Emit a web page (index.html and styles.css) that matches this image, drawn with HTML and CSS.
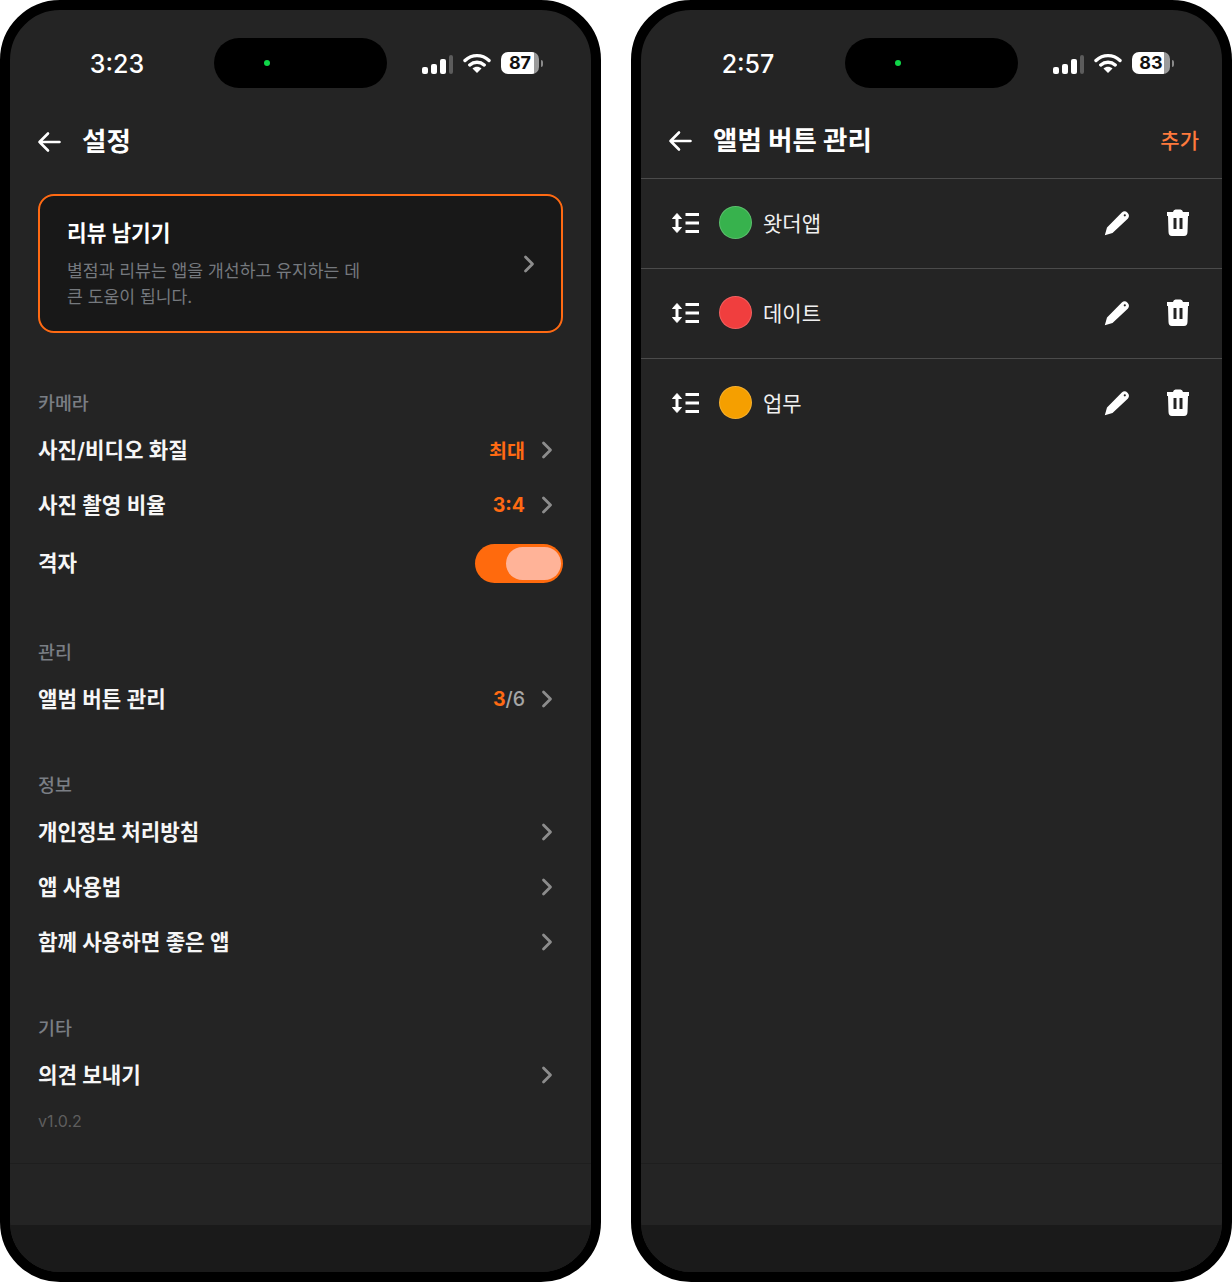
FILE: index.html
```html
<!DOCTYPE html>
<html lang="ko">
<head>
	<meta charset="UTF-8">
	<title>설정</title>
	<link rel="stylesheet" href="styles.css">
</head>
<body>
	<svg class="defs">
		<symbol id="i-back" viewBox="0 0 24 22">
			<path d="M22.5 11H2.5M11 2.5L2.5 11L11 19.5" fill="none" stroke="#fff" stroke-width="2.6" stroke-linecap="round" stroke-linejoin="round"/>
		</symbol>
		<symbol id="i-chevron" viewBox="0 0 12 18">
			<path d="M2.5 2L9.5 9L2.5 16" fill="none" stroke="#8c8c8c" stroke-width="2.8" stroke-linecap="round" stroke-linejoin="round"/>
		</symbol>
		<symbol id="i-wifi" viewBox="0 0 28 22">
			<path d="M2 8.5C9 2 19 2 26 8.5M6.8 13C11 9.3 17 9.3 21.2 13" fill="none" stroke="#fff" stroke-width="3.4" stroke-linecap="round"/>
			<path d="M9.5 16.5C12 14.3 16 14.3 18.5 16.5L14 21Z" fill="#fff"/>
		</symbol>
		<symbol id="i-handle" viewBox="0 0 28 22">
			<path d="M6 4V18" stroke="#fff" stroke-width="3"/>
			<path d="M1.5 6.5L6 1.5L10.5 6.5ZM1.5 15.5L6 20.5L10.5 15.5Z" fill="#fff" stroke="#fff" stroke-linejoin="round"/>
			<path d="M14.5 2.500H28M14.5 11H28M14.5 19.500H28" stroke="#fff" stroke-width="2.8"/>
		</symbol>
		<symbol id="i-pencil" viewBox="0 0 26 26">
			<path d="M0.8 25.2L3 17.5L17.8 2.4A4.4 4.4 0 0 1 24 8.5L8.500 23Z" fill="#fff"/>
			<circle cx="20.8" cy="5.3" r="1.1" fill="#242424"/>
		</symbol>
		<symbol id="i-trash" viewBox="0 0 22 27">
			<path fill-rule="evenodd" d="M0 3H6Q6.5 0.5 8.5 0.5H13.5Q15.5 0.5 16 3H22V7H21L20.5 23Q20.4 27 17 27H5Q1.6 27 1.5 23L1 7H0ZM6.5 9V20H9.5V9ZM12.5 9V20H15.5V9Z" fill="#fff"/>
		</symbol>
	</svg>

	<div class="phone">
		<div class="status">
			<div class="time">3:23</div>
			<div class="island"><span class="cam"></span></div>
			<div class="status-icons">
				<div class="signal"><i class="b1"></i><i class="b2"></i><i class="b3"></i><i class="b4"></i></div>
				<svg class="wifi"><use href="#i-wifi"/></svg>
				<div class="battery"><div class="batt-body batt-87">87</div><span class="batt-nub"></span></div>
			</div>
		</div>

		<div class="header">
			<svg class="back"><use href="#i-back"/></svg>
			<h1 class="title">설정</h1>
		</div>

		<div class="settings">
			<div class="review">
				<div class="review-text">
					<div class="review-title">리뷰 남기기</div>
					<p class="review-desc">별점과 리뷰는 앱을 개선하고 유지하는 데<br>큰 도움이 됩니다.</p>
				</div>
				<svg class="chevron"><use href="#i-chevron"/></svg>
			</div>

			<div class="label label-first">카메라</div>
			<div class="row"><span>사진/비디오 화질</span><span class="val">최대</span><svg class="chevron"><use href="#i-chevron"/></svg></div>
			<div class="row"><span>사진 촬영 비율</span><span class="val">3:4</span><svg class="chevron"><use href="#i-chevron"/></svg></div>
			<div class="row row-toggle"><span>격자</span><div class="toggle"><span class="knob"></span></div></div>

			<div class="label">관리</div>
			<div class="row"><span>앨범 버튼 관리</span><span class="val">3<em>/6</em></span><svg class="chevron"><use href="#i-chevron"/></svg></div>

			<div class="label">정보</div>
			<div class="row"><span>개인정보 처리방침</span><svg class="chevron"><use href="#i-chevron"/></svg></div>
			<div class="row"><span>앱 사용법</span><svg class="chevron"><use href="#i-chevron"/></svg></div>
			<div class="row"><span>함께 사용하면 좋은 앱</span><svg class="chevron"><use href="#i-chevron"/></svg></div>

			<div class="label">기타</div>
			<div class="row"><span>의견 보내기</span><svg class="chevron"><use href="#i-chevron"/></svg></div>
			<div class="version">v1.0.2</div>
		</div>

		<div class="footer"><div class="footer-bar"></div></div>
	</div>

	<div class="phone">
		<div class="status">
			<div class="time">2:57</div>
			<div class="island"><span class="cam"></span></div>
			<div class="status-icons">
				<div class="signal"><i class="b1"></i><i class="b2"></i><i class="b3"></i><i class="b4"></i></div>
				<svg class="wifi"><use href="#i-wifi"/></svg>
				<div class="battery"><div class="batt-body batt-83">83</div><span class="batt-nub"></span></div>
			</div>
		</div>

		<div class="header header-line">
			<svg class="back"><use href="#i-back"/></svg>
			<h1 class="title">앨범 버튼 관리</h1>
			<span class="add">추가</span>
		</div>

		<div class="albums">
			<div class="album">
				<svg class="handle"><use href="#i-handle"/></svg>
				<span class="dot dot-green"></span>
				<span class="album-name">왓더앱</span>
				<svg class="pencil"><use href="#i-pencil"/></svg>
				<svg class="trash"><use href="#i-trash"/></svg>
			</div>
			<div class="album">
				<svg class="handle"><use href="#i-handle"/></svg>
				<span class="dot dot-red"></span>
				<span class="album-name">데이트</span>
				<svg class="pencil"><use href="#i-pencil"/></svg>
				<svg class="trash"><use href="#i-trash"/></svg>
			</div>
			<div class="album">
				<svg class="handle"><use href="#i-handle"/></svg>
				<span class="dot dot-orange"></span>
				<span class="album-name">업무</span>
				<svg class="pencil"><use href="#i-pencil"/></svg>
				<svg class="trash"><use href="#i-trash"/></svg>
			</div>
		</div>

		<div class="footer"><div class="footer-bar"></div></div>
	</div>
</body>
</html>
```

FILE: styles.css
```css
* {
	margin: 0;
	padding: 0;
	box-sizing: border-box;
}

body {
	display: flex;
	gap: 30px;
	width: 1232px;
	height: 1282px;
	background: #fff;
	font-family: Inter, "Noto Sans CJK KR", sans-serif;
	color: #f6f6f6;
}

.defs {
	display: none;
}

.phone {
	display: flex;
	flex-direction: column;
	width: 601px;
	height: 1282px;
	border: 10px solid #000;
	border-radius: 60px;
	background: #242424;
	overflow: hidden;
}

/* status bar */
.status {
	display: flex;
	align-items: center;
	height: 50px;
	margin-top: 28px;
	flex: none;
}

.time {
	width: 204px;
	padding: 1px 0 0 10px;
	text-align: center;
	font-size: 25px;
	font-weight: 500;
	color: #fff;
}

.island {
	display: flex;
	align-items: center;
	width: 173px;
	height: 50px;
	padding-left: 50px;
	border-radius: 25px;
	background: #000;
}

.cam {
	width: 6px;
	height: 6px;
	border-radius: 50%;
	background: #0fd648;
}

.status-icons {
	display: flex;
	align-items: center;
	margin-left: 35px;
}

.signal {
	display: flex;
	align-items: flex-end;
	gap: 3px;
	height: 20px;
	margin-top: 1px;
}

.signal i {
	display: block;
	width: 6px;
	border-radius: 2px;
	background: #fff;
}

.signal .b1 { height: 7px; }
.signal .b2 { height: 10px; }
.signal .b3 { height: 15px; }
.signal .b4 { height: 19px; width: 4px; background: #5c5c5c; }

.wifi {
	width: 28px;
	height: 22px;
	margin-left: 10px;
}

.battery {
	display: flex;
	align-items: center;
	gap: 2px;
	margin-left: 10px;
}

.batt-body {
	width: 38px;
	height: 22px;
	border-radius: 7px;
	text-align: center;
	font-size: 18px;
	font-weight: 700;
	line-height: 22px;
	color: #111;
}

.batt-87 { background: linear-gradient(90deg, #fff 87%, #9a9a9a 87%); }
.batt-83 { background: linear-gradient(90deg, #fff 83%, #9a9a9a 83%); }

.batt-nub {
	width: 2px;
	height: 7px;
	border-radius: 0 2px 2px 0;
	background: #8a8a8a;
}

/* header */
.header {
	display: flex;
	align-items: center;
	height: 56px;
	margin-top: 24px;
	padding: 0 23px 0 27px;
	flex: none;
}

.header-line {
	height: 67px;
	padding-bottom: 11px;
	border-bottom: 1px solid #4b4b4b;
}

.back {
	width: 24px;
	height: 22px;
	margin-top: 3px;
}

.title {
	margin: -2px 0 0 21px;
	font-size: 26.5px;
	font-weight: 700;
	color: #fff;
}

.add {
	margin: -2px 0 0 auto;
	font-size: 21px;
	font-weight: 500;
	color: #ff7a3c;
}

/* settings list */
.settings {
	padding: 26px 28px 0;
}

.review {
	display: flex;
	align-items: center;
	justify-content: space-between;
	height: 139px;
	padding: 2px 26px 0 27px;
	border: 2px solid #ff6a13;
	border-radius: 16px;
	background: #181818;
}

.review-title {
	font-size: 21.4px;
	font-weight: 700;
	line-height: 28px;
	color: #fff;
}

.review-desc {
	margin-top: 11px;
	font-size: 17.2px;
	line-height: 26px;
	color: #75797e;
}

.label {
	height: 24px;
	margin: 47px 0 7px;
	font-size: 18.4px;
	font-weight: 500;
	line-height: 24px;
	color: #7a7e84;
}

.label-first {
	margin-top: 58px;
}

.row {
	display: flex;
	align-items: center;
	height: 55px;
	font-size: 21.2px;
	font-weight: 600;
	color: #f6f6f6;
}

.row > span:first-child {
	margin-top: -2px;
}

.row-toggle {
	justify-content: space-between;
	height: 61px;
	padding-top: 1px;
}

.row-toggle > span:first-child {
	margin-top: -4px;
}

.val {
	margin-left: auto;
	font-size: 19.5px;
	font-weight: 700;
	color: #ff6a13;
}

.val em {
	font-style: normal;
	font-weight: 500;
	color: #a5a5a5;
}

.chevron {
	width: 12px;
	height: 18px;
	margin: 0 10px 0 16px;
	flex: none;
}

.row > span:first-child + .chevron {
	margin-left: auto;
}

.review .chevron {
	margin: -2px 0 0 0;
}

.toggle {
	display: flex;
	justify-content: flex-end;
	align-items: center;
	width: 88px;
	height: 39px;
	padding-right: 2px;
	border-radius: 20px;
	background: #ff6a0d;
}

.knob {
	width: 55px;
	height: 33px;
	border-radius: 17px;
	background: #ffb398;
}

.version {
	margin-top: 7px;
	font-size: 16px;
	line-height: 24px;
	color: #5e5e5e;
}

/* album list */
.albums {
	display: flex;
	flex-direction: column;
}

.album {
	display: flex;
	align-items: center;
	height: 90px;
	padding: 0 33px 2px 30px;
	border-bottom: 1px solid #4b4b4b;
}

.album:last-child {
	border-bottom-color: transparent;
}

.handle {
	width: 28px;
	height: 22px;
	margin-right: 20px;
}

.dot {
	width: 33px;
	height: 33px;
	margin-right: 11px;
	border-radius: 50%;
	border: 1px solid rgba(255, 255, 255, 0.18);
}

.dot-green { background: #37b24d; }
.dot-red { background: #f03e3e; }
.dot-orange { background: #f59f00; }

.album-name {
	margin-top: -2px;
	font-size: 21px;
	font-weight: 400;
	color: #f0f0f0;
}

.pencil {
	width: 26px;
	height: 26px;
	margin-left: auto;
}

.trash {
	width: 22px;
	height: 27px;
	margin-left: 37px;
}

/* bottom of the screen */
.footer {
	display: flex;
	flex-direction: column;
	justify-content: flex-end;
	height: 109px;
	margin-top: auto;
	border-top: 1px solid #1e1e1e;
	flex: none;
}

.footer-bar {
	height: 47px;
	background: #1a1a1a;
}
```
